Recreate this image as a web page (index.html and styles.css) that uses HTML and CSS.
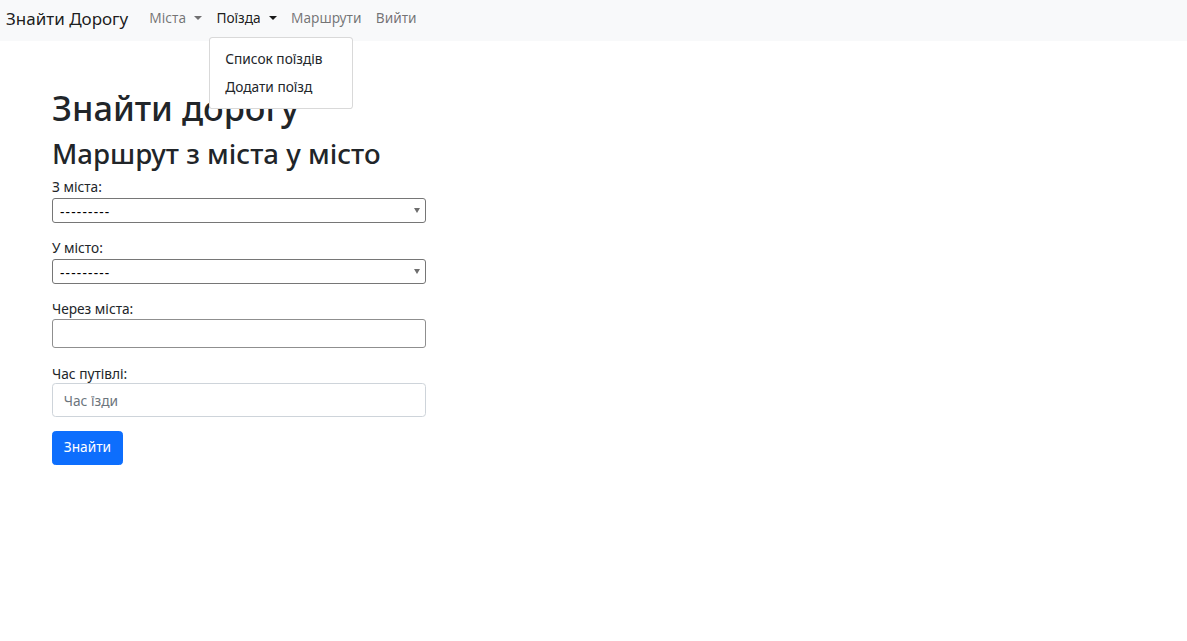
FILE: index.html
```html
<!DOCTYPE html>
<html lang="uk">
<head>
<meta charset="utf-8">
<title>Знайти Дорогу</title>
<link rel="stylesheet" href="styles.css">
</head>
<body>
<nav class="navbar">
  <a class="brand" href="#">Знайти Дорогу</a>
  <ul class="nav">
    <li class="nav-item"><a class="nav-link toggle" href="#">Міста</a></li>
    <li class="nav-item dropdown">
      <a class="nav-link toggle active" href="#">Поїзда</a>
      <div class="menu">
        <a class="menu-item" href="#">Список поїздів</a>
        <a class="menu-item" href="#">Додати поїзд</a>
      </div>
    </li>
    <li class="nav-item"><a class="nav-link" href="#">Маршрути</a></li>
    <li class="nav-item"><a class="nav-link" href="#">Вийти</a></li>
  </ul>
</nav>
<main class="container">
  <h1 class="title">Знайти дорогу</h1>
  <h2 class="subtitle">Маршрут з міста у місто</h2>
  <form class="form">
    <div class="field">
      <label class="label">З міста:</label>
      <div class="select-wrap"><select class="select"><option>---------</option></select></div>
    </div>
    <div class="field">
      <label class="label">У місто:</label>
      <div class="select-wrap"><select class="select"><option>---------</option></select></div>
    </div>
    <div class="field">
      <label class="label">Через міста:</label>
      <input class="plain-input" type="text">
    </div>
    <div class="field">
      <label class="label">Час путівлі:</label>
      <input class="form-control" type="text" placeholder="Час їзди">
    </div>
    <button class="btn" type="button">Знайти</button>
  </form>
</main>
</body>
</html>
```
FILE: styles.css
```css
* { box-sizing: border-box; }
html, body { margin: 0; padding: 0; }
body {
  font-family: "Noto Sans", "Open Sans", sans-serif;
  font-size: 13.7px;
  line-height: 1.5;
  color: #212529;
  background: #fff;
}
a { text-decoration: none; }

.navbar {
  display: flex;
  align-items: center;
  height: 41px;
  background: #f8f9fa;
  padding: 0 6px;
}
.brand {
  font-size: 17px;
  line-height: 27px;
  color: rgba(0,0,0,.9);
  margin-right: 14px;
  margin-top: -4px;
}
.nav {
  display: flex;
  list-style: none;
  margin: 0;
  padding: 0;
  margin-top: -5px;
}
.nav-item { position: relative; }
.nav-link {
  display: block;
  padding: 7.2px;
  line-height: 21.6px;
  color: rgba(0,0,0,.55);
}
.nav-link.active { color: rgba(0,0,0,.9); }
.toggle::after {
  content: "";
  display: inline-block;
  margin-left: 8px;
  vertical-align: 3.5px;
  border-top: 4.3px solid;
  border-right: 4.3px solid transparent;
  border-left: 4.3px solid transparent;
  border-bottom: 0;
}
.menu {
  position: absolute;
  top: calc(100% + 1px);
  left: 0;
  min-width: 144px;
  padding: 6px 0;
  background: #fff;
  border: 1px solid rgba(0,0,0,.15);
  border-radius: 3.6px;
  z-index: 10;
}
.menu-item {
  display: block;
  padding: 3.6px 14.4px 3.6px 15px;
  line-height: 21.6px;
  color: #212529;
  white-space: nowrap;
}

.container {
  padding: 45px 52px 0;
}
.title {
  font-size: 34.3px;
  font-weight: 500;
  line-height: 43px;
  margin: 0 0 7.2px;
}
.subtitle {
  font-size: 27.6px;
  font-weight: 500;
  line-height: 34.5px;
  margin: 0 0 5px;
}
.form { width: 374px; }
.field { margin-bottom: 14.4px; }
.label { display: block; line-height: 21.6px; }
.select-wrap { position: relative; margin: 1px 0 -1px; }
.select-wrap::after {
  content: "";
  position: absolute;
  right: 6px;
  top: 10px;
  border-top: 5px solid #6e6e6e;
  border-left: 3.5px solid transparent;
  border-right: 3.5px solid transparent;
  pointer-events: none;
}
.select {
  display: block;
  width: 100%;
  height: 25px;
  appearance: none;
  -webkit-appearance: none;
  background: #fff;
  border: 1px solid #767676;
  border-radius: 3px;
  padding: 1px 20px 0 7px;
  font-family: inherit;
  font-size: 13.7px;
  letter-spacing: 1.2px;
  color: #000;
}
.plain-input {
  display: block;
  width: 100%;
  height: 29px;
  border: 1px solid #8f8f8f;
  border-radius: 3px;
  padding: 0 8px;
  font-family: inherit;
  font-size: 13.3px;
}
.form-control {
  display: block;
  width: 100%;
  height: 34px;
  margin-top: -1px;
  border: 1px solid #ced4da;
  border-radius: 3.6px;
  padding: 0 10.8px;
  font-family: inherit;
  font-size: 13.7px;
  color: #212529;
}
.form-control::placeholder { color: #6c757d; }
.btn {
  display: inline-block;
  height: 34px;
  padding: 0 10.8px;
  margin-top: -1px;
  background: #0d6efd;
  border: 1px solid #0d6efd;
  border-radius: 3.6px;
  color: #fff;
  font-family: inherit;
  font-size: 13.7px;
  line-height: 1.5;
}
```
